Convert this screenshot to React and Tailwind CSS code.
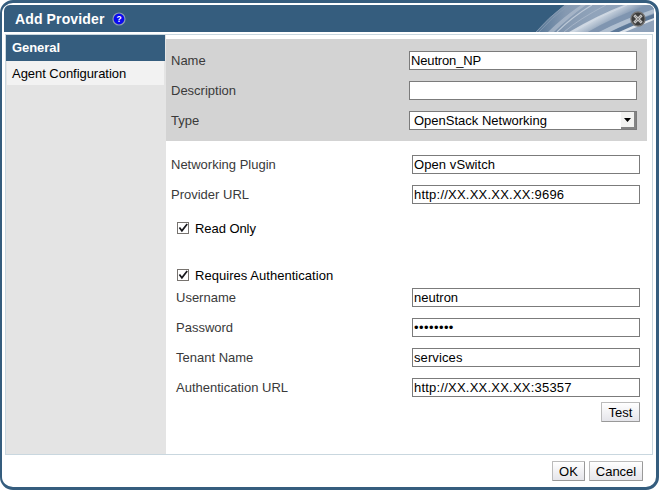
import React from 'react';

function Row({ label, children, inset }) {
  return (
    <div className={`flex h-[19px] items-center justify-between ${inset ? 'pl-[10px]' : 'pl-[5px]'}`}>
      <span className="whitespace-nowrap leading-[19px] text-[#3a3a3a]">{label}</span>
      {children}
    </div>
  );
}

function Field({ value, type = 'text', tracking = '' }) {
  return (
    <input
      type={type}
      defaultValue={value}
      className={`h-[19px] w-[228px] rounded-none border border-[#7b7b7b] bg-white px-[1px] py-0 leading-[17px] text-black outline-none ${tracking}`}
    />
  );
}

function Check({ label, tracking = '' }) {
  return (
    <div className="flex h-[15px] items-center pl-[11px]">
      <svg width="13" height="13" viewBox="0 0 13 13" className="shrink-0">
        <rect x="0.5" y="0.5" width="11" height="11" fill="#fff" stroke="#77736f" />
        <path d="M2.4 5.6 L4.9 8.8 L10.2 2" fill="none" stroke="#17171c" strokeWidth="1.7" />
      </svg>
      <span className={`pl-[5px] text-black ${tracking}`}>{label}</span>
    </div>
  );
}

function Button({ children, width }) {
  return (
    <button
      className={`flex h-5 items-center justify-center rounded-[1px] border border-[#bbb] border-r-[#999] border-b-[#999] bg-linear-to-b from-white to-[#e5e5ea] text-black ${width}`}
    >
      {children}
    </button>
  );
}

function HeaderArt() {
  return (
    <svg width="120" height="27" viewBox="0 0 120 27" className="shrink-0">
      <defs>
        <linearGradient id="sheen" x1="0" y1="0" x2="1" y2="0">
          <stop offset="0" stopColor="#587898" />
          <stop offset="0.25" stopColor="#8599b1" />
          <stop offset="0.5" stopColor="#91a4bb" />
          <stop offset="1" stopColor="#8fa2ba" />
        </linearGradient>
        <linearGradient id="band" gradientUnits="userSpaceOnUse" x1="60" y1="3" x2="72" y2="25">
          <stop offset="0" stopColor="#93a6bc" />
          <stop offset="0.4" stopColor="#d0d9e3" />
          <stop offset="0.65" stopColor="#a9b8ca" />
          <stop offset="1" stopColor="#6f87a5" />
        </linearGradient>
      </defs>
      <path d="M2 27 Q14 13 31 0 H120 V27Z" fill="url(#sheen)" />
      <path d="M2 27 Q14 13 31 0" fill="none" stroke="#8fa2b7" strokeWidth="0.8" />
      <path d="M5 27 Q17 13 35 0" fill="none" stroke="#8b9fb5" strokeWidth="0.7" />
      <path d="M14 27 Q28 13 47 0 L52 0 Q34 13 20 27Z" fill="#abb9ca" opacity="0.8" />
      <path d="M23 27 Q38 12 58 0" fill="none" stroke="#bdc9d7" strokeWidth="1.2" />
      <path d="M30 27 Q45 14 72 0" fill="none" stroke="#a6b5c8" strokeWidth="1" />
      <path d="M35 27 Q64 10 90 0 H113 Q77 13 54 27Z" fill="url(#band)" />
      <path d="M39 27 Q65 11 93 0" fill="none" stroke="#d0d9e4" strokeWidth="0.8" />
      <path d="M54 27 Q80 12 113 0 H120 V5 Q87 15 66 27Z" fill="#7d93ae" opacity="0.85" />
      <path d="M65 27 Q88 15 120 4 V8 Q93 18 76 27Z" fill="#b0bfd0" />
      <path d="M76 27 Q94 18 120 9 V14 Q102 20 88 27Z" fill="#5c7898" />
      <path d="M85 27 Q102 19 120 13 V15 Q105 21 91 27Z" fill="#dce3eb" />
      <circle cx="104" cy="14" r="7.1" fill="#3d3d3d" stroke="#777" strokeWidth="1.2" />
      <path d="M101.2 11.2 l5.6 5.6 m0 -5.6 l-5.6 5.6" stroke="#c4c4c4" strokeWidth="2.7" strokeLinecap="square" />
      <path d="M101.2 11.2 l5.6 5.6 m0 -5.6 l-5.6 5.6" stroke="#8a8a8a" strokeWidth="1" />
    </svg>
  );
}

export default function App() {
  return (
    <div className="h-[490px] w-[659px] bg-white font-['Liberation_Sans',Arial,sans-serif] text-[13px] leading-[15px]">
      <div className="flex h-full flex-col rounded-[13px] border-[3px] border-l-2 border-[#355d7e] bg-white">
        <header className="mt-[2px] mr-[2px] ml-[2px] flex h-[27px] shrink-0 items-center overflow-hidden rounded-t-[6px] bg-[#355d7e]">
          <h1 className="pt-px pl-[11px] text-[14px] leading-[27px] font-bold tracking-[0.13px] whitespace-nowrap text-white">Add Provider</h1>
          <svg width="14" height="14" viewBox="0 0 14 14" className="ml-[8px] shrink-0">
            <circle cx="7" cy="7" r="6" fill="#0909ef" stroke="#8c9bb4" strokeWidth="1.2" />
            <text x="7" y="9.9" textAnchor="middle" fontSize="8.5" fontWeight="bold" fill="#fff">?</text>
          </svg>
          <div className="flex-1" />
          <HeaderArt />
        </header>

        <div className="mt-[2px] mr-[3px] ml-[3px] flex h-[421px] shrink-0 border border-[#c9d7df]">
          <nav className="w-[160px] shrink-0 bg-[#e4e4e4]">
            <div className="mr-px h-[26px] bg-[#355d7e] pl-[6px] leading-[26px] font-bold tracking-[-0.06px] text-white">General</div>
            <div className="mr-[2px] ml-px h-6 bg-[#f2f2f2] pt-px pl-[5px] leading-6 tracking-[-0.04px] text-black">Agent Configuration</div>
          </nav>
          <main className="min-w-0 flex-1 pt-[4px]">
            <section className="mr-[5px] flex h-[102px] flex-col gap-[11px] bg-[#d3d3d3] pt-[12px] pr-[10px]">
              <Row label="Name"><Field value="Neutron_NP" tracking="tracking-[-0.15px]" /></Row>
              <Row label="Description"><Field value="" /></Row>
              <Row label="Type">
                <div className="flex h-[19px] w-[228px] items-center justify-between border border-[#7b7b7b] bg-white pl-[4px] text-black">
                  <span>OpenStack Networking</span>
                  <span className="flex h-[17px] w-[15px] items-center justify-center border-r-2 border-b-2 border-[#858585] bg-[#f3f3f1]">
                    <svg width="7" height="4" viewBox="0 0 7 4"><path d="M0 0h7L3.5 4Z" fill="#000" /></svg>
                  </span>
                </div>
              </Row>
            </section>
            <section className="flex flex-col gap-[11px] pt-[14px] pr-[12px]">
              <Row label="Networking Plugin"><Field value="Open vSwitch" tracking="tracking-[0.08px]" /></Row>
              <Row label="Provider URL"><Field value="http://XX.XX.XX.XX:9696" tracking="tracking-[0.22px]" /></Row>
            </section>
            <div className="pt-[17px]"><Check label="Read Only" tracking="tracking-[-0.06px]" /></div>
            <div className="pt-[32px]"><Check label="Requires Authentication" tracking="tracking-[0.04px]" /></div>
            <section className="flex flex-col gap-[11px] pt-[5px] pr-[12px]">
              <Row inset label="Username"><Field value="neutron" /></Row>
              <Row inset label="Password"><Field type="password" value="password" tracking="tracking-[0.43px]" /></Row>
              <Row inset label="Tenant Name"><Field value="services" tracking="tracking-[0.1px]" /></Row>
              <Row inset label="Authentication URL"><Field value="http://XX.XX.XX.XX:35357" tracking="tracking-[0.22px]" /></Row>
            </section>
            <div className="flex justify-end pt-[5px] pr-[12px]"><Button width="w-[39px]">Test</Button></div>
          </main>
        </div>

        <footer className="flex justify-end gap-[4px] pt-[6px] pr-[13px]">
          <Button width="w-[33px]">OK</Button>
          <Button width="w-[54px]">Cancel</Button>
        </footer>
      </div>
    </div>
  );
}
